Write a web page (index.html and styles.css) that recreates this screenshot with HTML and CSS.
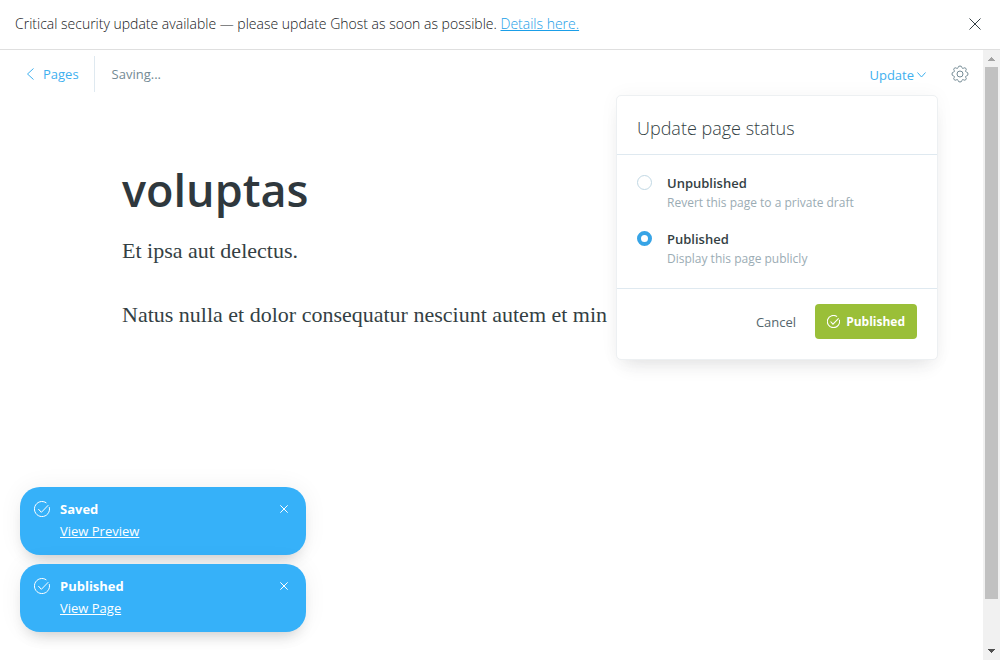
FILE: index.html
```html
<!DOCTYPE html>
<html lang="en">
<head>
<meta charset="utf-8">
<meta name="viewport" content="width=device-width, initial-scale=1">
<title>Ghost editor</title>
<link rel="stylesheet" href="styles.css">
</head>
<body>
<svg class="sprite" aria-hidden="true">
  <symbol id="check" viewBox="0 0 24 24"><path d="M22.900 9.200A11.300 11.300 0 1 1 18.600 2.900M6.500 12l4.500 5L21.500 6.200"/></symbol>
  <symbol id="cross" viewBox="0 0 12 12"><path d="M0.500 0.500l11 11M11.500 0.500l-11 11"/></symbol>
</svg>

<aside class="alert">
  <p class="alert-text">Critical security update available — please update Ghost as soon as possible. <a href="#details">Details here.</a></p>
  <button class="icon-button" type="button" aria-label="Close alert"><svg class="alert-cross"><use href="#cross"/></svg></button>
</aside>

<div class="viewport">
  <main class="editor">
    <header class="toolbar">
      <a class="back" href="#pages"><svg class="back-arrow" viewBox="0 0 8 12"><path d="M7.500 0.500L1.500 6l6 5.500"/></svg>Pages</a>
      <span class="save-state">Saving...</span>
      <div class="publish">
        <button class="publish-trigger" type="button" aria-expanded="true">Update<svg class="chevron" viewBox="0 0 9 6"><path d="M0.500 0.500l4 4.500 4-4.500"/></svg></button>
        <form class="menu">
          <h2 class="menu-title">Update page status</h2>
          <div class="options">
            <label class="option">
              <input class="radio" type="radio" name="status">
              <span class="option-text"><strong>Unpublished</strong><small>Revert this page to a private draft</small></span>
            </label>
            <label class="option">
              <input class="radio" type="radio" name="status" checked>
              <span class="option-text"><strong>Published</strong><small>Display this page publicly</small></span>
            </label>
          </div>
          <footer class="menu-footer">
            <button class="cancel" type="button">Cancel</button>
            <button class="confirm" type="button"><svg class="confirm-icon"><use href="#check"/></svg>Published</button>
          </footer>
        </form>
      </div>
      <button class="icon-button" type="button" aria-label="Settings">
        <svg class="gear" viewBox="0 0 18 18"><circle cx="9" cy="9" r="3"/><path d="M7 2.600Q7.200 1 9 1Q10.800 1 11 2.600Q11.300 4 12.600 3.200Q13.800 2.300 14.800 3.300Q15.800 4.300 14.800 5.400Q14 6.700 15.400 7Q17 7.200 17 9Q17 10.800 15.400 11Q14 11.300 14.800 12.600Q15.800 13.700 14.800 14.700Q13.800 15.700 12.600 14.800Q11.300 14 11 15.400Q10.800 17 9 17Q7.200 17 7 15.400Q6.700 14 5.400 14.800Q4.200 15.700 3.200 14.700Q2.200 13.700 3.200 12.600Q4 11.300 2.600 11Q1 10.800 1 9Q1 7.200 2.600 7Q4 6.700 3.200 5.400Q2.200 4.300 3.200 3.300Q4.200 2.300 5.400 3.200Q6.700 4 7 2.600Z"/></svg>
      </button>
    </header>
    <article class="post">
      <h1>voluptas</h1>
      <p>Et ipsa aut delectus.</p>
      <p>Natus nulla et dolor consequatur nesciunt autem et min</p>
    </article>
  </main>
  <div class="scrollbar" aria-hidden="true">
    <svg class="scroll-arrow scroll-up" viewBox="0 0 7 4"><path d="M3 0h1v1h1v1h1v1h1v1H0V3h1V2h1V1h1z"/></svg>
    <div class="scroll-track"><div class="scroll-thumb"></div></div>
    <svg class="scroll-arrow" viewBox="0 0 7 4"><path d="M0 0h7v1H6v1H5v1H4v1H3V3H2V2H1V1H0z"/></svg>
  </div>
</div>

<section class="toasts" aria-label="Notifications">
  <div class="toast">
    <svg class="toast-icon"><use href="#check"/></svg>
    <div class="toast-text"><strong>Saved</strong><a href="#preview">View Preview</a></div>
    <button class="icon-button" type="button" aria-label="Dismiss"><svg class="toast-cross"><use href="#cross"/></svg></button>
  </div>
  <div class="toast">
    <svg class="toast-icon"><use href="#check"/></svg>
    <div class="toast-text"><strong>Published</strong><a href="#page">View Page</a></div>
    <button class="icon-button" type="button" aria-label="Dismiss"><svg class="toast-cross"><use href="#cross"/></svg></button>
  </div>
</section>
</body>
</html>
```
FILE: styles.css
```css
* { box-sizing: border-box; }
body {
  margin: 0;
  height: 100vh;
  display: flex;
  flex-direction: column;
  overflow: hidden;
  background: #fff;
  color: #343f44;
  font: 13px/20px "Open Sans", "Noto Sans", sans-serif;
}
h1, h2, p { margin: 0; }
button { padding: 0; border: 0; background: none; color: inherit; font: inherit; cursor: pointer; }
svg { display: block; fill: none; stroke: currentColor; overflow: visible; }
.sprite { position: absolute; width: 0; height: 0; }
.icon-button { flex: none; }

.alert {
  display: flex;
  align-items: center;
  justify-content: space-between;
  padding: 14px 19px 15px 15px;
  border-bottom: 1px solid #dfdfdf;
  color: #15171a;
}
.alert-text { font-size: 14px; font-weight: 300; }
.alert-text a { color: #1a9ee8; }
.alert-cross { width: 12px; height: 12px; color: #343f44; }

.viewport { flex: 1; display: flex; min-height: 0; }
.editor { flex: 1; min-width: 0; }
.toolbar { display: flex; align-items: center; padding: 6px 14px 6px 26px; height: 48px; }
.back {
  display: flex;
  align-items: center;
  gap: 9px;
  height: 36px;
  padding-right: 15px;
  border-right: 1px solid #dfe9f0;
  color: #3eb0ef;
  text-decoration: none;
}
.back-arrow { width: 8px; height: 12px; }
.save-state { margin-left: 17px; color: #738a94; }
.publish { position: relative; margin-left: auto; margin-right: 25px; }
.publish-trigger { display: flex; align-items: center; gap: 3px; padding-top: 2px; color: #3eb0ef; }
.chevron { width: 9px; height: 6px; }
.gear { width: 18px; height: 18px; color: #738a94; }

.menu {
  position: absolute;
  top: 32px;
  right: -12px;
  width: 322px;
  border: 1px solid #edf0f2;
  border-radius: 5px;
  background: #fff;
  box-shadow: 0 0 20px rgba(0, 0, 0, .04), 0 12px 18px -8px rgba(39, 44, 49, .12);
}
.menu-title { padding: 20px 20px 14px; font-size: 18px; line-height: 24px; font-weight: 300; }
.options {
  display: grid;
  gap: 17px;
  padding: 19px 20px;
  border: solid #dfe9f0;
  border-width: 1px 0;
}
.option { display: flex; align-items: flex-start; gap: 15px; }
.radio {
  appearance: none;
  width: 15px;
  height: 15px;
  margin: 1px 0;
  border: 1px solid #c1d8e4;
  border-radius: 50%;
  background: #fff;
}
.radio:checked { border: 4px solid #37a4e6; }
.option-text { display: grid; gap: 1px; }
.option-text strong { font-size: 13px; line-height: 18px; font-weight: 600; }
.option-text small { font-size: 12px; line-height: 20px; color: #9bacb4; }
.menu-footer { display: flex; align-items: center; justify-content: flex-end; gap: 19px; padding: 15px 20px 20px; }
.cancel { color: #54666d; }
.confirm {
  display: flex;
  align-items: center;
  gap: 6px;
  height: 35px;
  padding: 0 12px;
  border-radius: 4px;
  background: #9abf38;
  color: #fff;
  font-size: 12px;
  font-weight: 700;
}
.confirm-icon { width: 13px; height: 13px; stroke-width: 2; }

.post { padding: 60px 122px; font: 22px/32px "Liberation Serif", serif; }
.post h1 { margin-bottom: 13px; font: 600 45px/64px "Open Sans", "Noto Sans", sans-serif; color: #2f383d; }
.post p { margin-bottom: 32px; white-space: nowrap; }

.scrollbar {
  flex: none;
  display: flex;
  flex-direction: column;
  align-items: center;
  width: 17px;
  padding: 7px 2px;
  background: #f1f1f1;
}
.scroll-arrow { width: 7px; height: 4px; fill: #505050; stroke: none; }
.scroll-up { fill: #a3a3a3; }
.scroll-track { flex: 1; width: 100%; padding: 6px 0; display: grid; grid-template-rows: 12fr 1fr; }
.scroll-thumb { background: #c1c1c1; }

.toasts { position: absolute; left: 20px; bottom: 28px; display: grid; gap: 9px; width: 286px; }
.toast {
  display: flex;
  align-items: flex-start;
  gap: 10px;
  padding: 12px 18px 14px 14px;
  border-radius: 20px;
  background: #36b1f9;
  color: #fff;
  box-shadow: 0 0 24px rgba(0, 0, 0, .06), 0 10px 16px -8px rgba(0, 0, 0, .2);
}
.toast-icon { width: 16px; height: 16px; margin-top: 2px; stroke-width: 1.5; }
.toast-text { flex: 1; display: grid; justify-items: start; gap: 2px; }
.toast-text a { color: #fff; }
.toast-cross { width: 8px; height: 8px; margin: 6px 0; stroke-width: 1.5; }
```
